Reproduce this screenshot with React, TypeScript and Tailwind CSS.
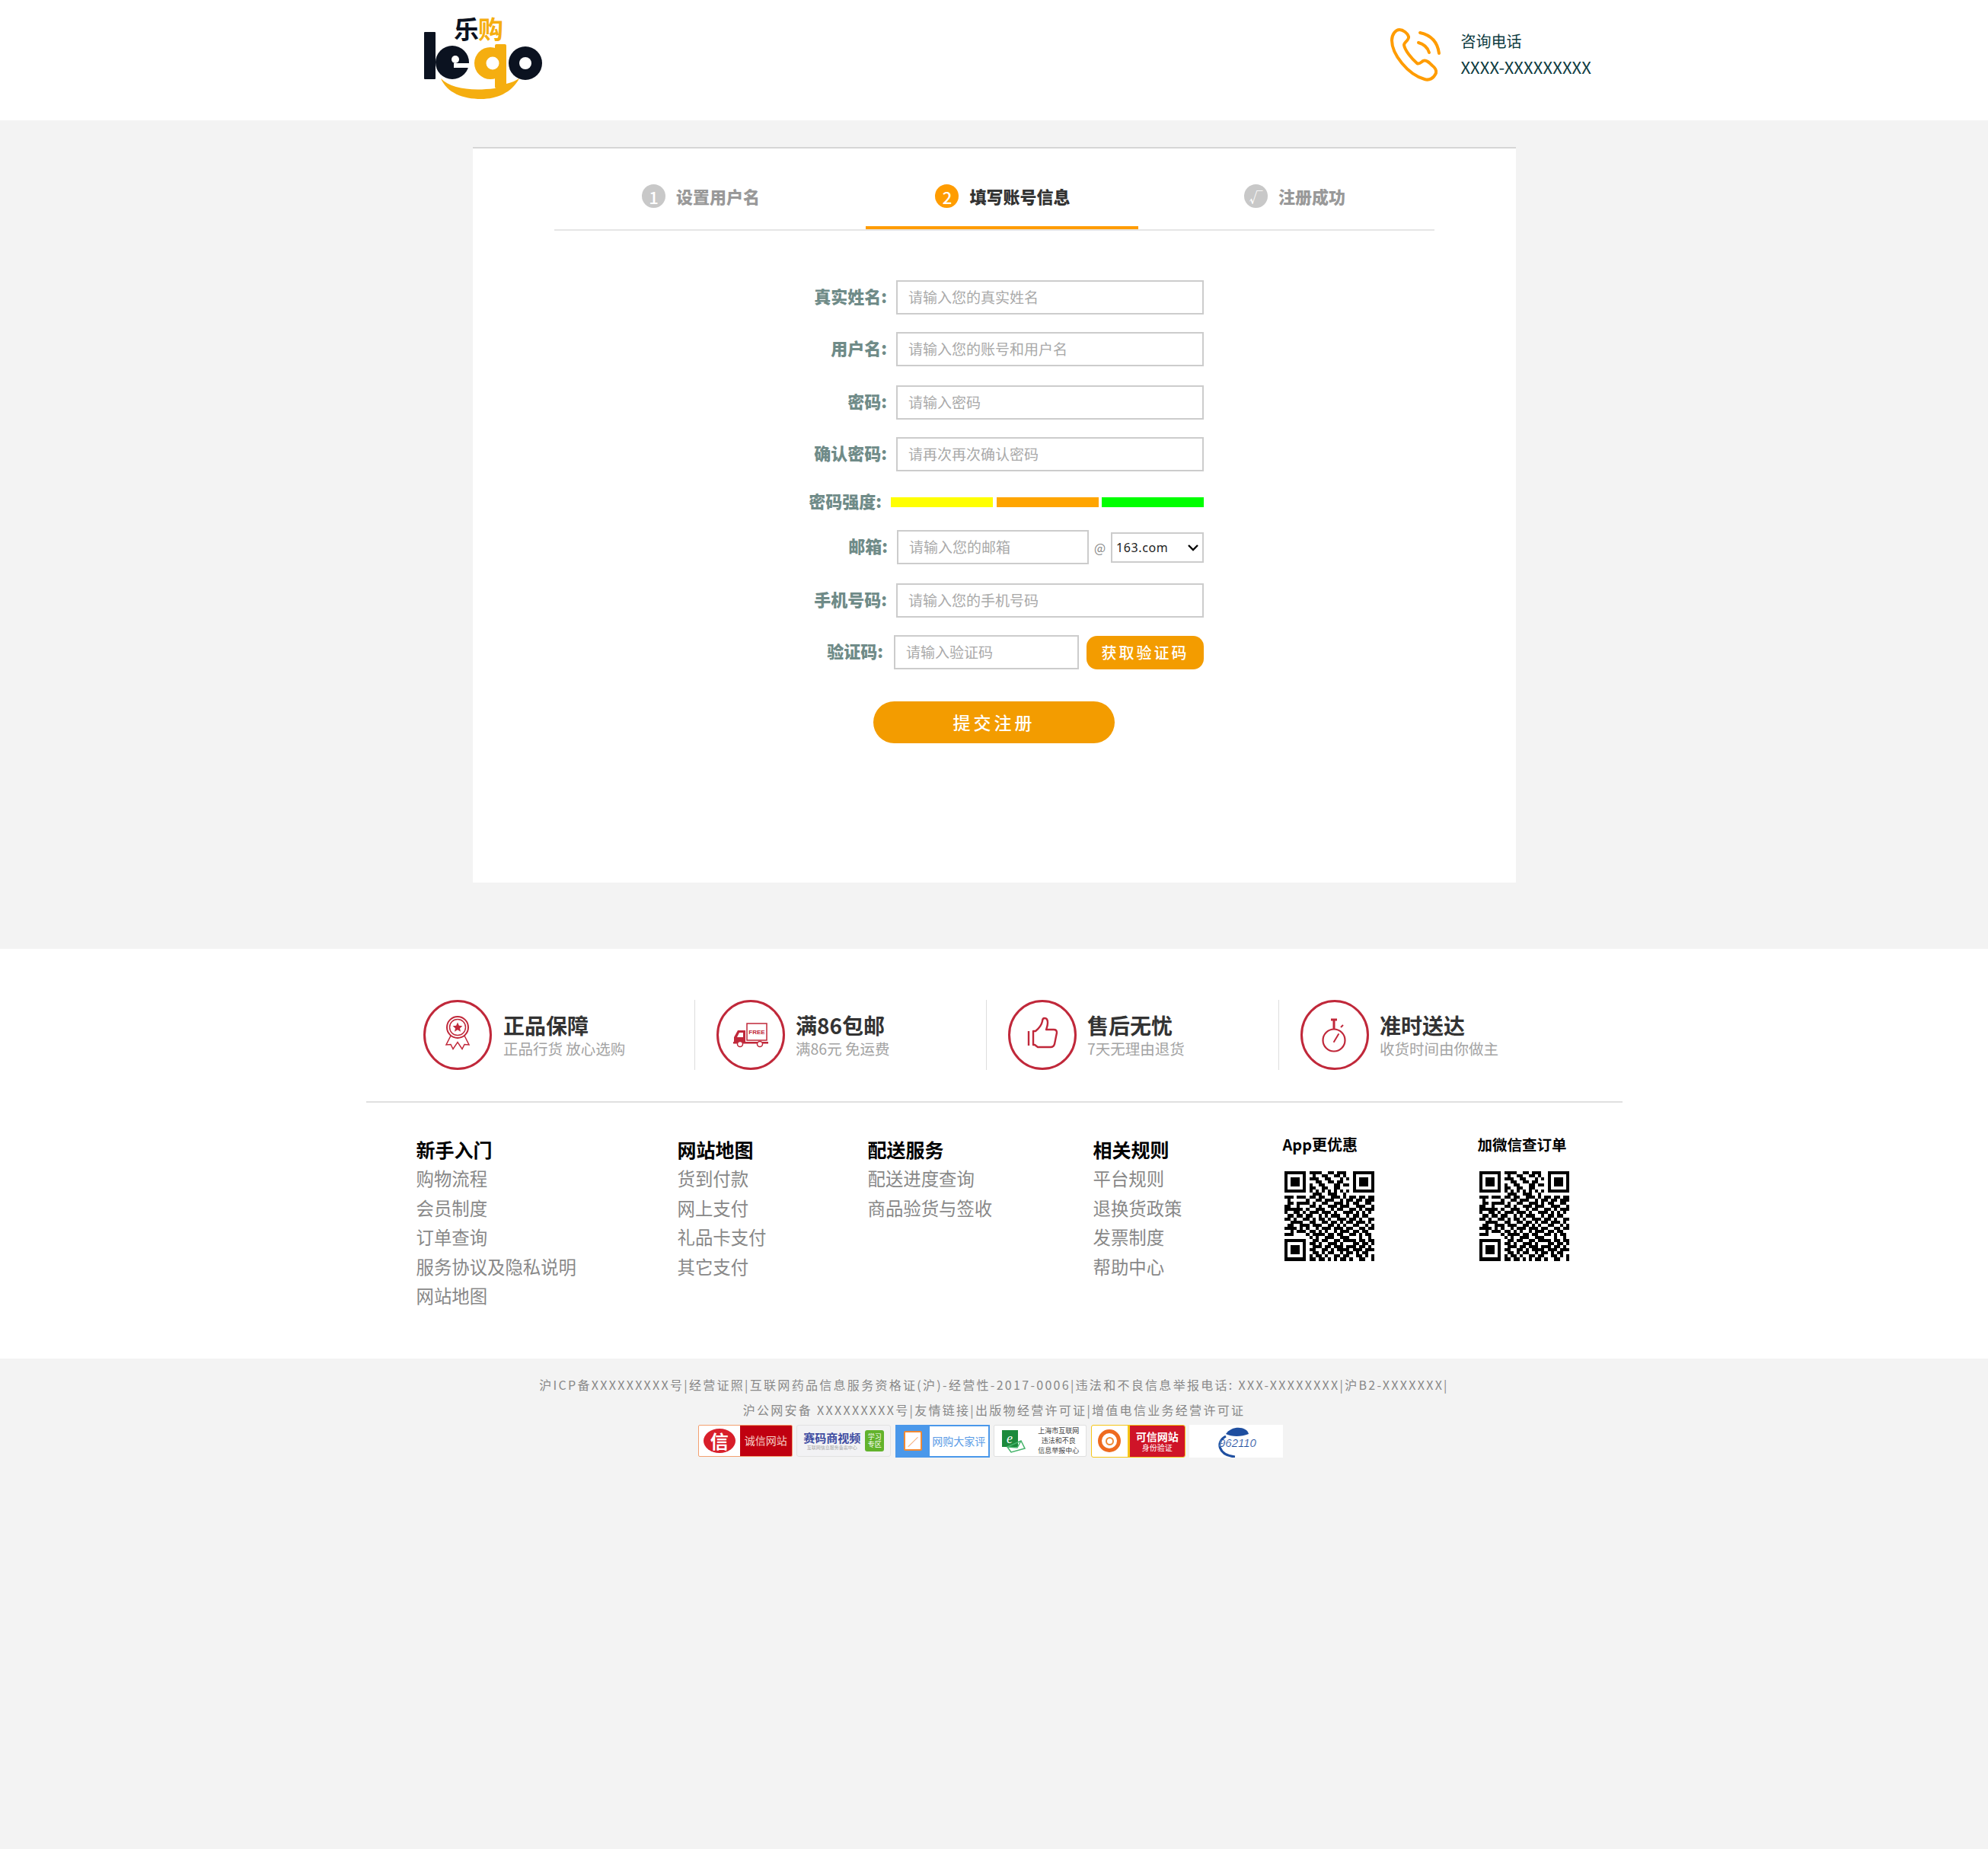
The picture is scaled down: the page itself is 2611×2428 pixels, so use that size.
const font = "font-['Noto_Sans_CJK_SC','Noto_Sans',sans-serif]"

const qrRows = [
  "11111110111100110111001111111",
  "10000010010011001101001000001",
  "10111010111001100010101011101",
  "10111010001100110110001011101",
  "10111010100110001101101011101",
  "10000010110011001100001000001",
  "11111110101010101010101111111",
  "00000000011100111001000000000",
  "11101110110110011101011011011",
  "01000001001101110010110110111",
  "01101111010011001110101100110",
  "11001000110100111011100111001",
  "11111101001110010110011010111",
  "10011010111011101001110101010",
  "01101101100101011100101101100",
  "11010011010110100111011010011",
  "00111100110011011010110111010",
  "01100111011100110101001100101",
  "11110101001011101110110011011",
  "00101110110101001011101101100",
  "11100001011110110110011010110",
  "00000000101001110011100010010",
  "11111110011011001101111011011",
  "10000010110100111010001101101",
  "10111010011101101110111011010",
  "10111010110011010111101110111",
  "10111010011010110010110101100",
  "10000010101101001101100110101",
  "11111110110110101011010011001",
]

const QrCode = () => (
  <svg width="118" height="119" viewBox="0 0 29 29" shapeRendering="crispEdges">
    {qrRows.map((row, y) =>
      row.split("").map((cell, x) => (cell === "1" ? <rect key={`${x}-${y}`} x={x} y={y} width="1" height="1" fill="#000" /> : null))
    )}
  </svg>
)

const Logo = () => (
  <svg width="190" height="130" viewBox="0 0 190 130">
    <text x="56" y="41" fontSize="33" fontWeight="700" fill="#0b1220" fontFamily="'Noto Sans CJK SC',sans-serif">乐</text>
    <text x="88" y="41" fontSize="33" fontWeight="700" fill="#f5ae10" fontFamily="'Noto Sans CJK SC',sans-serif">购</text>
    <path d="M39 93C52 106 78 110 110 106L125 100C133 98 137 96 142 93C132 112 112 120 92 120C68 120 47 112 39 93Z" fill="#f5ae10" />
    <rect x="17" y="32" width="15" height="62" rx="1" fill="#0b1220" />
    <circle cx="54" cy="72" r="22" fill="#0b1220" />
    <rect x="56" y="73" width="22" height="6" fill="#fff" />
    <circle cx="58" cy="68" r="5" fill="#fff" />
    <circle cx="150" cy="73" r="22" fill="#0b1220" />
    <circle cx="150" cy="73" r="8" fill="#fff" />
    <circle cx="104" cy="73" r="21" fill="#f5ae10" />
    <rect x="110" y="48" width="15" height="58" rx="2" fill="#f5ae10" />
    <circle cx="107" cy="73" r="8.5" fill="#fff" />
  </svg>
)

const PhoneIcon = () => (
  <svg width="74" height="72" viewBox="0 0 74 72" fill="none" stroke="#ff9c00" strokeWidth="4" strokeLinecap="round" strokeLinejoin="round">
    <path d="M13 3C8 3 3 9 3 17C3 35 24 62 46 68C52 70 58 67 61 60C62 56 60 53 56 50C52 46 48 42 44 44C41 46 39 49 36 47C29 41 20 30 19 23C19 19 26 17 25 12C24 8 18 3 13 3Z" />
    <path d="M40 7C54 10 63 19 65 34" />
    <path d="M38 20C45 22 50 26 52 33" />
  </svg>
)

const StepCircle = ({ children, active, small }: { children: string; active?: boolean; small?: boolean }) => (
  <span className={`flex h-[31px] w-[31px] shrink-0 items-center justify-center rounded-full leading-none font-medium text-white ${small ? "text-[18px]" : "text-[22px]"} ${active ? "bg-[#ff9c00]" : "bg-[#c8c8c8]"}`}>
    {children}
  </span>
)

const FormRow = ({ label, placeholder }: { label: string; placeholder: string }) => (
  <div className="flex items-center justify-end">
    <label className="mr-[12px] pb-[4px] text-[22px] font-black text-[#6f8b88]">{label}:</label>
    <input placeholder={placeholder} className="h-[45px] w-[404px] border-2 border-[#cccccc] bg-white px-[14px] pb-[2px] text-[19px] outline-none placeholder:text-[#a9a9a9]" />
  </div>
)

const AwardIcon = () => (
  <g>
    <circle cx="45" cy="36" r="14" />
    <circle cx="45" cy="36" r="10.5" strokeWidth="1.5" />
    <path d="M45 29.5l1.9 4.2 4.5.5-3.4 3 1 4.5-4-2.4-4 2.4 1-4.5-3.4-3 4.5-.5z" fill="#c0283a" stroke="none" />
    <path d="M36 47l-6 12 6-.5 3 6 6-9 6 9 3-6 6 .5-6-12" strokeWidth="1.5" />
  </g>
)

const TruckIcon = () => (
  <g>
    <rect x="40" y="31" width="26" height="22" strokeWidth="1.5" />
    <text x="53" y="45" textAnchor="middle" fontSize="8" fontWeight="700" fill="#c0283a" stroke="none" fontFamily="'Liberation Sans',sans-serif">FREE</text>
    <path d="M38 40h-10l-5 9v8h15z" fill="#c0283a" stroke="none" />
    <path d="M30 43h5v6h-8z" fill="#fff" stroke="none" />
    <rect x="22" y="55" width="46" height="2.5" fill="#c0283a" stroke="none" />
    <circle cx="31" cy="58" r="3.5" fill="#fff" strokeWidth="1.5" />
    <circle cx="57" cy="58" r="3.5" fill="#fff" strokeWidth="1.5" />
  </g>
)

const ThumbIcon = () => (
  <g strokeWidth="2.4" strokeLinejoin="round">
    <path d="M33 41h3c5-4 8-8 9-13 0-3 1-4 3-4 3 0 4 3 4 6 0 4-1 6-2 9h10c3 0 4 2 4 4l-3 15c-1 3-2 4-5 4H39l-4-3H33z" />
    <path d="M27 41v19" />
  </g>
)

const WatchIcon = () => (
  <g>
    <circle cx="44" cy="53" r="14.5" strokeWidth="2.2" />
    <path d="M40 26h8M44 26v12" strokeWidth="3" />
    <path d="M53 36l3-3" strokeWidth="2" />
    <path d="M44 55l6-10" strokeWidth="2" strokeLinecap="round" />
  </g>
)

const features = [
  { title: "正品保障", sub: "正品行货 放心选购", icon: <AwardIcon />, cls: "w-[384px] gap-[15px] pl-[27px] border-r border-[#dddddd]" },
  { title: "满86包邮", sub: "满86元 免运费", icon: <TruckIcon />, cls: "w-[383px] gap-[14px] pl-[28px] border-r border-[#dddddd]" },
  { title: "售后无忧", sub: "7天无理由退货", icon: <ThumbIcon />, cls: "w-[384px] gap-[14px] pl-[28px] border-r border-[#dddddd]" },
  { title: "准时送达", sub: "收货时间由你做主", icon: <WatchIcon />, cls: "w-[384px] gap-[14px] pl-[28px]" },
]

const linkCols = [
  { title: "新手入门", width: "w-[343px]", items: ["购物流程", "会员制度", "订单查询", "服务协议及隐私说明", "网站地图"] },
  { title: "网站地图", width: "w-[250px]", items: ["货到付款", "网上支付", "礼品卡支付", "其它支付"] },
  { title: "配送服务", width: "w-[296px]", items: ["配送进度查询", "商品验货与签收"] },
  { title: "相关规则", width: "w-[248px]", items: ["平台规则", "退换货政策", "发票制度", "帮助中心"] },
]

const Badges = () => (
  <div className="mt-[3px] flex justify-center gap-[5.5px] pr-[9px] tracking-normal">
    <div className="flex h-[42px] w-[124px] overflow-hidden rounded-[2px] border border-[#f3a070] bg-white">
      <div className="flex w-[54px] items-center justify-center">
        <span className="flex h-[32px] w-[42px] items-center justify-center rounded-[50%] bg-[#d81e2a] text-[24px] leading-none font-bold text-white">信</span>
      </div>
      <div className="flex flex-1 items-center justify-center bg-[#c00010] text-[14px] text-[#f6d0c8]">诚信网站</div>
    </div>
    <div className="flex h-[42px] w-[124px] items-center justify-between rounded-[3px] border border-[#e2e2e2] bg-[#f2f2f4] px-[8px]">
      <div className="flex flex-col leading-none">
        <span className="text-[15px] font-bold text-[#3c4aa0]">赛码商视频</span>
        <span className="mt-[3px] text-[6px] text-[#aaaaaa]">互联网信息服务备案中心</span>
      </div>
      <span className="flex h-[28px] w-[25px] items-center justify-center rounded-[3px] bg-[#62b32c] text-center text-[9px] leading-[10px] text-white">学习专区</span>
    </div>
    <div className="flex h-[43px] w-[124px] border-2 border-[#4a98ea] bg-white">
      <div className="flex w-[43px] shrink-0 items-center justify-center bg-[#4a98ea]">
        <span className="flex h-[26px] w-[24px] items-center justify-center rounded-[2px] border-2 border-[#f08a34] bg-white text-[14px] leading-none text-[#f08a34]">∕</span>
      </div>
      <div className="flex flex-1 items-center justify-center text-[14px] whitespace-nowrap text-[#5a9ce6]">网购大家评</div>
    </div>
    <div className="flex h-[42px] w-[122px] items-center justify-between rounded-[2px] border border-[#e0e0e0] bg-white px-[9px]">
      <svg width="32" height="32" viewBox="0 0 32 32">
        <rect x="1" y="2" width="21" height="22" fill="#1c8a3c" />
        <text x="11" y="19" textAnchor="middle" fontSize="18" fontStyle="italic" fill="#fff" fontFamily="'Liberation Serif',serif">e</text>
        <path d="M8 24l18-8 5 10-18 5zM8 24l13 1 5-9" fill="#fff" stroke="#45b46a" strokeWidth="1.5" />
      </svg>
      <div className="text-center text-[9px] leading-[13px] text-[#444444]">
        <p>上海市互联网</p>
        <p>违法和不良</p>
        <p>信息举报中心</p>
      </div>
    </div>
    <div className="flex h-[43px] w-[124px] overflow-hidden rounded-[3px] border border-[#f5c518] bg-white">
      <div className="flex w-[50px] items-center justify-center border-r-[3px] border-[#f5c518]">
        <span className="flex h-[30px] w-[30px] items-center justify-center rounded-full border-[5px] border-[#ee6a1f]">
          <span className="h-[11px] w-[11px] rounded-full border-2 border-[#f08a34]" />
        </span>
      </div>
      <div className="flex flex-1 flex-col items-center justify-center bg-[#cf1428] leading-none text-white">
        <span className="text-[14px] font-bold">可信网站</span>
        <span className="mt-[3px] text-[10px]">身份验证</span>
      </div>
    </div>
    <div className="flex h-[43px] w-[123px] items-center justify-center bg-white">
      <svg width="72" height="43" viewBox="0 0 72 43">
        <path d="M22 12C30 0 50 2 52 12C42 16 30 16 22 12Z" fill="#1f4fa0" />
        <path d="M22 15C8 22 12 40 34 42" fill="none" stroke="#1f4fa0" strokeWidth="3" />
        <text x="13" y="29" fontSize="15" fontStyle="italic" fill="#1f4fa0" stroke="#fff" strokeWidth="0.2" fontFamily="'Liberation Sans',sans-serif">962110</text>
      </svg>
    </div>
  </div>
)

export default function App() {
  return (
    <div className={`min-h-[2428px] bg-[#f3f3f3] ${font}`}>
      <header className="flex h-[158px] items-center justify-between bg-white pr-[521px] pl-[540px]">
        <div className="mb-[8px]">
          <Logo />
        </div>
        <div className="mb-[14px] flex items-center">
          <PhoneIcon />
          <div className="ml-[19px] pb-[5px] text-[20px] leading-[34px] text-[#0d3b3f]">
            <p>咨询电话</p>
            <p className="text-[22px] leading-[32px] tracking-[0.1px]">XXXX-XXXXXXXXX</p>
          </div>
        </div>
      </header>

      <main className="pt-[35px] pb-[87px]">
        <div className="mx-auto ml-[621px] h-[966px] w-[1370px] border-t-2 border-[#d6d6d6] bg-white">
          <div className="mx-[107px] flex h-[108px] w-[1156px] border-b-2 border-[#e5e5e5] pt-[47px]">
            <div className="flex h-[59px] w-[409px] items-start gap-[14px] pl-[115px]">
              <StepCircle>1</StepCircle>
              <span className="text-[22px] leading-[31px] font-black text-[#999999]">设置用户名</span>
            </div>
            <div className="flex h-[59px] w-[358px] items-start justify-center gap-[14px] border-b-4 border-[#ff9c00] pl-[2px]">
              <StepCircle active>2</StepCircle>
              <span className="text-[22px] leading-[31px] font-black text-[#333333]">填写账号信息</span>
            </div>
            <div className="flex h-[59px] items-start gap-[14px] pl-[139px]">
              <StepCircle small>√</StepCircle>
              <span className="text-[22px] leading-[31px] font-black text-[#999999]">注册成功</span>
            </div>
          </div>

          <form className="pt-[65px] pr-[410px]">
            <FormRow label="真实姓名" placeholder="请输入您的真实姓名" />
            <div className="mt-[23px]"><FormRow label="用户名" placeholder="请输入您的账号和用户名" /></div>
            <div className="mt-[25px]"><FormRow label="密码" placeholder="请输入密码" /></div>
            <div className="mt-[23px]"><FormRow label="确认密码" placeholder="请再次再次确认密码" /></div>

            <div className="mt-[34px] flex h-[13px] items-center justify-end">
              <span className="mr-[12px] pb-[4px] text-[22px] font-black text-[#6f8b88]">密码强度:</span>
              <div className="flex h-[13px] w-[411px] gap-[4.5px]">
                <div className="flex-1 bg-[#ffff00]" />
                <div className="flex-1 bg-[#ffa500]" />
                <div className="flex-1 bg-[#00ff00]" />
              </div>
            </div>

            <div className="mt-[30px] flex items-center justify-end">
              <label className="mr-[12px] pb-[4px] text-[22px] font-black text-[#6f8b88]">邮箱:</label>
              <input placeholder="请输入您的邮箱" className="h-[45px] w-[252px] border-2 border-[#cccccc] px-[14px] pb-[2px] text-[19px] outline-none placeholder:text-[#a9a9a9]" />
              <span className="mx-[7px] w-[15px] text-center text-[16px] text-[#888888]">@</span>
              <div className="relative h-[40px] w-[122px]">
                <select defaultValue="163.com" className="h-full w-full appearance-none border-2 border-[#cccccc] bg-white pl-[5px] font-['Noto_Sans',sans-serif] text-[16px] tracking-[0.6px] text-[#222222] outline-none">
                  <option>163.com</option>
                  <option>qq.com</option>
                  <option>126.com</option>
                </select>
                <svg width="14" height="9" viewBox="0 0 14 9" fill="none" stroke="#000" strokeWidth="2.4" className="pointer-events-none absolute top-[16px] right-[7px]">
                  <path d="M1 1l6 6 6-6" />
                </svg>
              </div>
            </div>

            <div className="mt-[25px]"><FormRow label="手机号码" placeholder="请输入您的手机号码" /></div>

            <div className="mt-[23px] flex items-center justify-end">
              <label className="mr-[14px] pb-[4px] text-[22px] font-black text-[#6f8b88]">验证码:</label>
              <input placeholder="请输入验证码" className="h-[45px] w-[243px] border-2 border-[#cccccc] px-[14px] pb-[2px] text-[19px] outline-none placeholder:text-[#a9a9a9]" />
              <button type="button" className="ml-[10px] h-[44px] w-[154px] rounded-[14px] bg-[#f39c00] text-[20px] font-medium tracking-[3px] text-white">获取验证码</button>
            </div>

            <div className="mt-[42px] ml-[526px]">
              <button type="button" className="h-[55px] w-[317px] rounded-full bg-[#f39c00] text-[23px] font-medium tracking-[4px] text-white">提交注册</button>
            </div>
          </form>
        </div>
      </main>

      <footer className="bg-white pt-[67px] pb-[62px]">
        <div className="flex pl-[529px]">
          {features.map((f) => (
            <div key={f.title} className={`flex h-[92px] items-center ${f.cls}`}>
              <svg width="90" height="92" viewBox="0 0 90 92" fill="none" stroke="#c0283a" strokeWidth="2" className="shrink-0">
                <ellipse cx="45" cy="46" rx="43.5" ry="44.5" strokeWidth="3" />
                {f.icon}
              </svg>
              <div className="pt-[4px]">
                <p className="text-[28px] leading-[32px] font-bold text-[#333333]">{f.title}</p>
                <p className="text-[19.5px] leading-[30px] font-normal text-[#a3a3a3]">{f.sub}</p>
              </div>
            </div>
          ))}
        </div>

        <div className="mx-auto mt-[41px] w-[1650px] border-t-2 border-[#e0e0e0] pt-[42px] pb-[1px] pl-[66px]">
          <div className="flex">
            {linkCols.map((col) => (
              <div key={col.title} className={col.width}>
                <h4 className="text-[25px] leading-[38px] font-bold text-black">{col.title}</h4>
                <ul>
                  {col.items.map((item) => (
                    <li key={item} className="text-[23.4px] leading-[38.6px] text-[#888888]">{item}</li>
                  ))}
                </ul>
              </div>
            ))}
            <div className="w-[257px]">
              <p className="-mt-[1px] ml-[1px] text-[20px] leading-[28px] font-bold text-black">App更优惠</p>
              <div className="mt-[20px] ml-[3px]"><QrCode /></div>
            </div>
            <div>
              <p className="-mt-[1px] text-[19.5px] leading-[28px] font-bold text-black">加微信查订单</p>
              <div className="mt-[20px] ml-[2px]"><QrCode /></div>
            </div>
          </div>
        </div>
      </footer>

      <div className="pt-[18px] text-center text-[16px] leading-[33px] tracking-[2.3px] text-[#888888]">
        <p>沪ICP备XXXXXXXXX号|经营证照|互联网药品信息服务资格证(沪)-经营性-2017-0006|违法和不良信息举报电话: XXX-XXXXXXXX|沪B2-XXXXXXX|</p>
        <p>沪公网安备 XXXXXXXXX号|友情链接|出版物经营许可证|增值电信业务经营许可证</p>
        <Badges />
      </div>
    </div>
  )
}
